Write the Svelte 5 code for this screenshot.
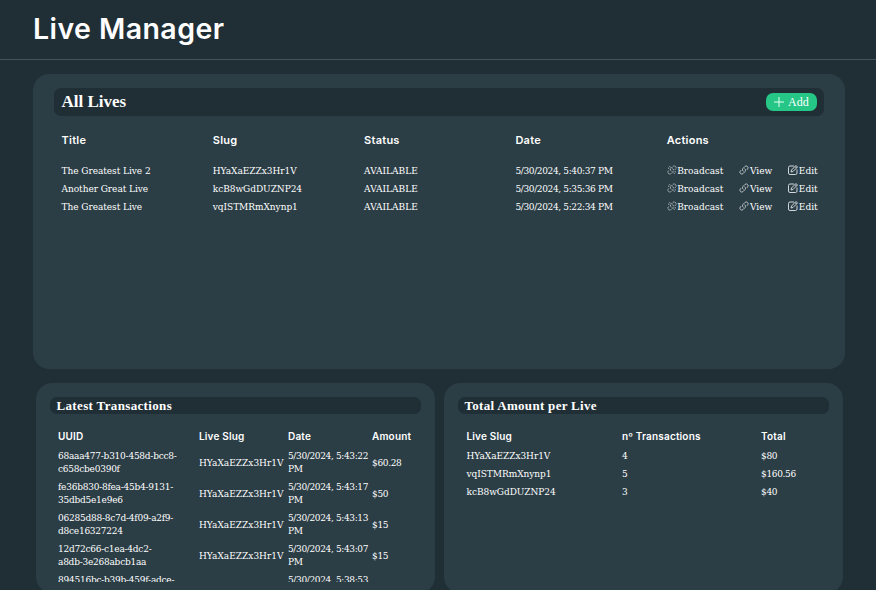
<script>
  const lives = [
    { title: 'The Greatest Live 2', slug: 'HYaXaEZZx3Hr1V', date: '5/30/2024, 5:40:37 PM' },
    { title: 'Another Great Live', slug: 'kcB8wGdDUZNP24', date: '5/30/2024, 5:35:36 PM' },
    { title: 'The Greatest Live', slug: 'vqISTMRmXnynp1', date: '5/30/2024, 5:22:34 PM' }
  ];
  const transactions = [
    { uuid: ['68aaa477-b310-458d-bcc8-', 'c658cbe0390f'], time: '5:43:22', amount: '$60.28' },
    { uuid: ['fe36b830-8fea-45b4-9131-', '35dbd5e1e9e6'], time: '5:43:17', amount: '$50' },
    { uuid: ['06285d88-8c7d-4f09-a2f9-', 'd8ce16327224'], time: '5:43:13', amount: '$15' },
    { uuid: ['12d72c66-c1ea-4dc2-', 'a8db-3e268abcb1aa'], time: '5:43:07', amount: '$15' },
    { uuid: ['894516bc-b39b-459f-adce-', ''], time: '5:38:53', amount: '' }
  ];
  const totals = [
    { slug: 'HYaXaEZZx3Hr1V', count: 4, total: '$80' },
    { slug: 'vqISTMRmXnynp1', count: 5, total: '$160.56' },
    { slug: 'kcB8wGdDUZNP24', count: 3, total: '$40' }
  ];
</script>

<div class="page">
  <header><h1>Live Manager</h1></header>
  <main>
    <section class="card lives">
      <div class="bar">
        <h2>All Lives</h2>
        <button>
          <svg width="10" height="10" viewBox="0 0 10 10"><path d="M5 0v10M0 5h10" /></svg>
          <span>Add</span>
        </button>
      </div>
      <div class="grid head">
        <b>Title</b><b>Slug</b><b>Status</b><b>Date</b><b>Actions</b>
      </div>
      {#each lives as live}
        <div class="grid row">
          <span class="title">{live.title}</span>
          <span class="slug">{live.slug}</span>
          <span>AVAILABLE</span>
          <span class="date">{live.date}</span>
          <div class="actions">
            <span class="action">
              <svg width="10" height="10" viewBox="0 0 24 24"><path d="M13.2 8.700a4.500 4.500 0 0 1 1.200 7.200l-4.500 4.500a4.500 4.500 0 0 1-6.400-6.400l1.800-1.800M18.700 11.800l1.800-1.800a4.500 4.500 0 0 0-6.400-6.400l-4.500 4.500a4.500 4.500 0 0 0 1.200 7.200" stroke-dasharray="4.500 1.500" /><path d="M6 3l2 3M2.500 7l3 1.500M16 18l2 3M18.500 15.500l3 1.500" /></svg><span>Broadcast</span>
            </span>
            <span class="action">
              <svg width="10" height="10" viewBox="0 0 24 24"><path d="M13.200 8.700a4.500 4.500 0 0 1 1.200 7.200l-4.500 4.500a4.500 4.500 0 0 1-6.400-6.400l1.800-1.800M18.700 11.800l1.800-1.800a4.500 4.500 0 0 0-6.400-6.400l-4.500 4.500a4.500 4.500 0 0 0 1.200 7.200" /></svg><span>View</span>
            </span>
            <span class="action">
              <svg width="10" height="10" viewBox="0 0 20 20"><path d="M12 2H4a3 3 0 0 0-3 3v11a3 3 0 0 0 3 3h11a3 3 0 0 0 3-3V9M6 14l1-4 9-9 3 3-9 9zM14 3l3 3" /></svg><span>Edit</span>
            </span>
          </div>
        </div>
      {/each}
    </section>
    <div class="bottom">
      <section class="card small">
        <div class="bar"><h3>Latest Transactions</h3></div>
        <div class="scroll">
          <div class="tx thead"><b>UUID</b><b>Live Slug</b><b>Date</b><b>Amount</b></div>
          {#each transactions as tx}
            <div class="tx entry">
              <span class="uuid">{tx.uuid[0]}<br />{tx.uuid[1]}&nbsp;</span>
              <span class="slug wide">{tx.amount ? 'HYaXaEZZx3Hr1V' : ''}</span>
              <span class="date">5/30/2024, {tx.time}<br />{tx.amount ? 'PM' : ''}&nbsp;</span>
              <span class="amount">{tx.amount}</span>
            </div>
          {/each}
        </div>
      </section>
      <section class="card small">
        <div class="bar"><h3 class="amounts">Total Amount per Live</h3></div>
        <div class="scroll">
          <div class="sum thead"><b>Live Slug</b><b>nº Transactions</b><b>Total</b></div>
          {#each totals as item}
            <div class="sum line">
              <span class="slug">{item.slug}</span><span>{item.count}</span><span class="amount">{item.total}</span>
            </div>
          {/each}
        </div>
      </section>
    </div>
  </main>
</div>

<style>
  :global(body) { background: #202e35; overflow: hidden; }
  .page {
    height: 590px; overflow: hidden; color: #fff; background: #202e35;
    font: 9px/13px 'DejaVu Serif', 'Noto Serif', serif; white-space: nowrap;
  }
  h1, h2, h3 { margin: 0; }
  header { height: 59px; border-bottom: 1px solid #45535a; padding-left: 33px; }
  h1 { font: 600 28.5px/58px Inter, sans-serif; letter-spacing: .43px; }
  main { padding: 14px 31px 0 33px; }
  .card { box-sizing: border-box; background: #2b3d45; border-radius: 16px; }
  .lives { height: 295px; padding: 14px 21px; }
  .bar {
    display: flex; align-items: center; justify-content: space-between;
    background: #202e35; border-radius: 7px;
  }
  .lives .bar { height: 28px; padding: 0 7px 0 7.5px; }
  h2 { font: bold 17px/28px 'Liberation Serif', serif; }
  button {
    display: flex; align-items: center; gap: 4px; width: 51px; height: 18px; padding: 0 8px;
    border: 0; border-radius: 7px; background: #26c687; color: #fff;
    font: 12px/18px 'Liberation Serif', serif;
  }
  svg { flex: none; fill: none; stroke: #cfd6d9; stroke-width: 2; }
  button svg { stroke: #e4fff3; stroke-width: 1; }
  .grid { display: grid; grid-template-columns: repeat(5, 151.3px); padding-left: 7.5px; align-items: center; }
  .head { height: 18px; margin: 15px 0 13px; }
  b { font: 600 11px/18px Inter, sans-serif; letter-spacing: .25px; }
  .row { height: 18px; }
  .title { letter-spacing: -.05px; }
  .slug { letter-spacing: -.05px; }
  .slug.wide { letter-spacing: 0; }
  .date { letter-spacing: -.36px; }
  .uuid { letter-spacing: -.24px; }
  .amount { letter-spacing: -.35px; }
  .actions { display: flex; justify-content: space-between; width: 151px; }
  .action { display: flex; align-items: center; }
  .action svg { position: relative; top: -1.5px; margin-right: .5px; }
  .bottom { display: flex; gap: 9px; padding: 14px 2px 0 3px; }
  .small { width: 399px; height: 210px; padding: 14px; }
  .small .bar { height: 17px; padding-left: 6.5px; }
  h3 { font: bold 13px/18px 'Liberation Serif', serif; letter-spacing: .35px; padding-top: 1px; }
  .amounts { letter-spacing: .3px; }
  .scroll { height: 168px; overflow: hidden; padding: 13px 0 0 8px; box-sizing: border-box; }
  .thead { height: 20px; }
  .thead b { font-size: 10px; letter-spacing: .17px; }
  .tx { display: grid; grid-template-columns: 141px 89px 84px 50px; align-items: center; }
  .tx.thead, .sum.thead { align-items: start; }
  .entry { height: 26px; margin-bottom: 5px; }
  .thead + .entry { margin-top: 3px; }
  .sum { display: grid; grid-template-columns: 155.5px 139px 60px; align-items: center; padding-left: .5px; }
  .line { height: 18px; }
</style>
